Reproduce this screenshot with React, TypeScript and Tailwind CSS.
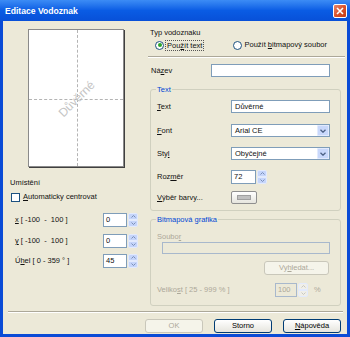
import React from "react";

const U = ({ children }: { children: React.ReactNode }) => <span className="underline">{children}</span>;

function Spinner({ disabled = false }: { disabled?: boolean }) {
  const bg = disabled ? "bg-[#f0efe9]" : "bg-[#c5d5fa]";
  const stroke = disabled ? "#c8c8c0" : "#7a8fb8";
  return (
    <div className="flex flex-col w-[10px] h-[14px] ml-[1px] gap-[0px]">
      <div className={`flex-1 ${bg} rounded-t-[2px] flex items-center justify-center border border-[#e2eafd]`}>
        <svg width="5" height="3" viewBox="0 0 5 3"><path d="M0.5 2.5 L2.5 0.5 L4.5 2.5" fill="none" stroke={stroke} strokeWidth="1" /></svg>
      </div>
      <div className={`flex-1 ${bg} rounded-b-[2px] flex items-center justify-center border border-[#e2eafd]`}>
        <svg width="5" height="3" viewBox="0 0 5 3"><path d="M0.5 0.5 L2.5 2.5 L4.5 0.5" fill="none" stroke={stroke} strokeWidth="1" /></svg>
      </div>
    </div>
  );
}

function Combo({ value }: { value: string }) {
  return (
    <div className="w-[99px] h-[13px] border border-[#7f9db9] bg-white flex items-center">
      <span className="flex-1 pl-[3px] leading-[10px]">{value}</span>
      <div className="w-[12px] h-[11px] mr-[0px] bg-[#c9d8fb] rounded-[1px] flex items-center justify-center border border-[#e2eafd]">
        <svg width="6" height="4" viewBox="0 0 6 4"><path d="M0.5 0.8 L3 3.2 L5.5 0.8" fill="none" stroke="#4d6185" strokeWidth="1.3" /></svg>
      </div>
    </div>
  );
}

function Btn({ children, disabled = false, w = "w-[58px]" }: { children: React.ReactNode; disabled?: boolean; w?: string }) {
  return (
    <div
      className={`${w} h-[14px] rounded-[3px] border flex items-center justify-center leading-[10px] ${
        disabled
          ? "border-[#c9c7ba] bg-[#f5f4ea] text-[#aca899]"
          : "border-[#003c74] bg-gradient-to-b from-white to-[#e6e5de] text-black"
      }`}
    >
      {children}
    </div>
  );
}

export default function App() {
  return (
    <div
      className="w-[350px] h-[337px] bg-[#0a4bd6] flex flex-col text-[7.5px] text-[#111]"
      style={{ fontFamily: '"Liberation Sans", Arial, sans-serif' }}
    >
      {/* Title bar */}
      <div className="h-[21px] flex items-center bg-gradient-to-b from-[#3c8cf5] via-[#0a5ce4] to-[#0850d8] pl-[5px] pr-[3px]">
        <span className="flex-1 text-white font-bold text-[8.6px] leading-[10px] pt-[1px]">Editace Vodoznak</span>
        <div className="w-[14px] h-[14px] rounded-[2px] border border-white bg-gradient-to-br from-[#e9866a] via-[#d9532c] to-[#c43a12] flex items-center justify-center">
          <svg width="8" height="8" viewBox="0 0 8 8"><path d="M1 1 L7 7 M7 1 L1 7" stroke="white" strokeWidth="1.6" /></svg>
        </div>
      </div>

      {/* Body */}
      <div className="flex-1 mx-[3px] mb-[3px] bg-[#ece9d8] flex flex-col">
        <div className="h-[290px] flex">
          {/* Left column */}
          <div className="w-[147px] flex flex-col">
            <div className="ml-[25px] mt-[8px] w-[96px] h-[138px] bg-white border border-[#8a8a8a] shadow-[1px_1px_0_#404040] relative overflow-hidden">
              <div className="absolute left-[48px] top-0 bottom-0 border-l border-dashed border-[#b4b4b4]" />
              <div className="absolute top-[69px] left-0 right-0 border-t border-dashed border-[#b4b4b4]" />
              <div className="absolute left-[48px] top-[69px] w-0 h-0 flex items-center justify-center">
                <span className="-rotate-45 text-[12px] text-[#c4c4c4] whitespace-nowrap leading-[12px]">Důvěrné</span>
              </div>
            </div>
            <div className="ml-[7px] mt-[11px] h-[10px] leading-[10px]">Umístění</div>
            <div className="ml-[8px] mt-[4px] h-[10px] flex items-center">
              <div className="w-[9px] h-[9px] border border-[#1c5180] bg-white" />
              <span className="ml-[3px] leading-[10px]"><U>A</U>utomaticky centrovat</span>
            </div>
            {[
              [<><U>x</U> [ -100  -  100 ]</>, "0", "mt-[11px]"],
              [<><U>y</U> [ -100  -  100 ]</>, "0", "mt-[7px]"],
              [<>Ú<U>h</U>el [ 0 - 359 ° ]</>, "45", "mt-[6px]"],
            ].map(([label, val, mt], i) => (
              <div key={i} className={`${mt as string} h-[14px] flex items-center`}>
                <span className="ml-[12px] w-[88px] leading-[10px] whitespace-pre">{label as React.ReactNode}</span>
                <div className="w-[24px] h-[14px] border border-[#7f9db9] bg-white pl-[2px] flex items-center leading-[10px]">{val as string}</div>
                <Spinner />
              </div>
            ))}
          </div>

          {/* Right column */}
          <div className="w-[195px] flex flex-col">
            <div className="mt-[7px] h-[10px] leading-[10px]">Typ vodoznaku</div>
            <div className="mt-[2px] h-[10px] flex items-center">
              <div className="ml-[5px] w-[9px] h-[9px] rounded-full border border-[#1c5180] bg-white flex items-center justify-center">
                <div className="w-[4px] h-[4px] rounded-full bg-[#2aa52a]" />
              </div>
              <span className="ml-[1px] px-[1px] border border-dotted border-[#555] leading-[9px]">Pou<U>ž</U>ít text</span>
              <div className="ml-[29px] w-[9px] h-[9px] rounded-full border border-[#1c5180] bg-white" />
              <span className="ml-[2px] leading-[10px]">Použít <U>b</U>itmapový soubor</span>
            </div>
            <div className="mt-[6px] -ml-[2px] w-[197px] h-[2px] border-t border-[#aca899] border-b border-b-white" />
            <div className="mt-[6px] h-[13px] flex items-center">
              <span className="ml-[1px] w-[60px] leading-[10px]">Ná<U>z</U>ev</span>
              <div className="w-[119px] h-[13px] border border-[#7f9db9] bg-white" />
            </div>

            {/* Text group */}
            <div className="mt-[12px] w-[191px] h-[122px] border border-[#d0d0bf] rounded-[3px] relative flex flex-col">
              <span className="absolute -top-[5px] left-[5px] px-[1px] bg-[#ece9d8] text-[#0046d5] leading-[10px]">Text</span>
              <div className="mt-[10px] h-[13px] flex items-center">
                <span className="ml-[6px] w-[74px] leading-[10px]"><U>T</U>ext</span>
                <div className="w-[99px] h-[13px] border border-[#7f9db9] bg-white pl-[3px] flex items-center leading-[10px]">Důvěrné</div>
              </div>
              <div className="mt-[11px] h-[13px] flex items-center">
                <span className="ml-[6px] w-[74px] leading-[10px]"><U>F</U>ont</span>
                <Combo value="Arial CE" />
              </div>
              <div className="mt-[10px] h-[13px] flex items-center">
                <span className="ml-[6px] w-[74px] leading-[10px]">Sty<U>l</U></span>
                <Combo value="Obyčejné" />
              </div>
              <div className="mt-[10px] h-[14px] flex items-center">
                <span className="ml-[6px] w-[74px] leading-[10px]">Roz<U>m</U>ěr</span>
                <div className="w-[25px] h-[14px] border border-[#7f9db9] bg-white pl-[2px] flex items-center leading-[10px]">72</div>
                <Spinner />
              </div>
              <div className="mt-[7px] h-[13px] flex items-center">
                <span className="ml-[6px] w-[74px] leading-[10px]"><U>V</U>ýběr barvy...</span>
                <div className="w-[26px] h-[13px] rounded-[2px] border border-[#8f8f8f] bg-gradient-to-b from-white to-[#e6e5de] flex items-center justify-center">
                  <div className="w-[14px] h-[5px] bg-[#c0c0c0] border border-[#a0a0a0]" />
                </div>
              </div>
            </div>

            {/* Bitmap group */}
            <div className="mt-[8px] w-[191px] h-[87px] border border-[#d0d0bf] rounded-[3px] relative flex flex-col text-[#aca899]">
              <span className="absolute -top-[5px] left-[5px] px-[1px] bg-[#ece9d8] text-[#0046d5] leading-[10px]">Bitmapová grafika</span>
              <div className="mt-[12px] ml-[6px] h-[10px] leading-[10px]">Soubo<U>r</U></div>
              <div className="ml-[11px] w-[168px] h-[12px] border border-[#a8b8cc] bg-[#ece9d8]" />
              <div className="mt-[7px] ml-[113px]">
                <Btn disabled w="w-[65px]">Vy<U>h</U>ledat...</Btn>
              </div>
              <div className="mt-[8px] h-[14px] flex items-center">
                <span className="ml-[6px] w-[118px] leading-[10px]">Veliko<U>s</U>t [ 25 - 999 % ]</span>
                <div className="w-[22px] h-[14px] border border-[#a8b8cc] bg-[#ece9d8] pl-[2px] flex items-center leading-[10px]">100</div>
                <Spinner disabled />
                <span className="ml-[6px] leading-[10px]">%</span>
              </div>
            </div>
          </div>
        </div>

        {/* Footer */}
        <div className="ml-[5px] w-[335px] h-[2px] border-t border-[#aca899] border-b border-b-white" />
        <div className="mt-[6px] flex items-center">
          <div className="ml-[142px]"><Btn disabled>OK</Btn></div>
          <div className="ml-[11px]"><Btn>Storno</Btn></div>
          <div className="ml-[11px]"><Btn><U>N</U>ápověda</Btn></div>
        </div>
      </div>
    </div>
  );
}
